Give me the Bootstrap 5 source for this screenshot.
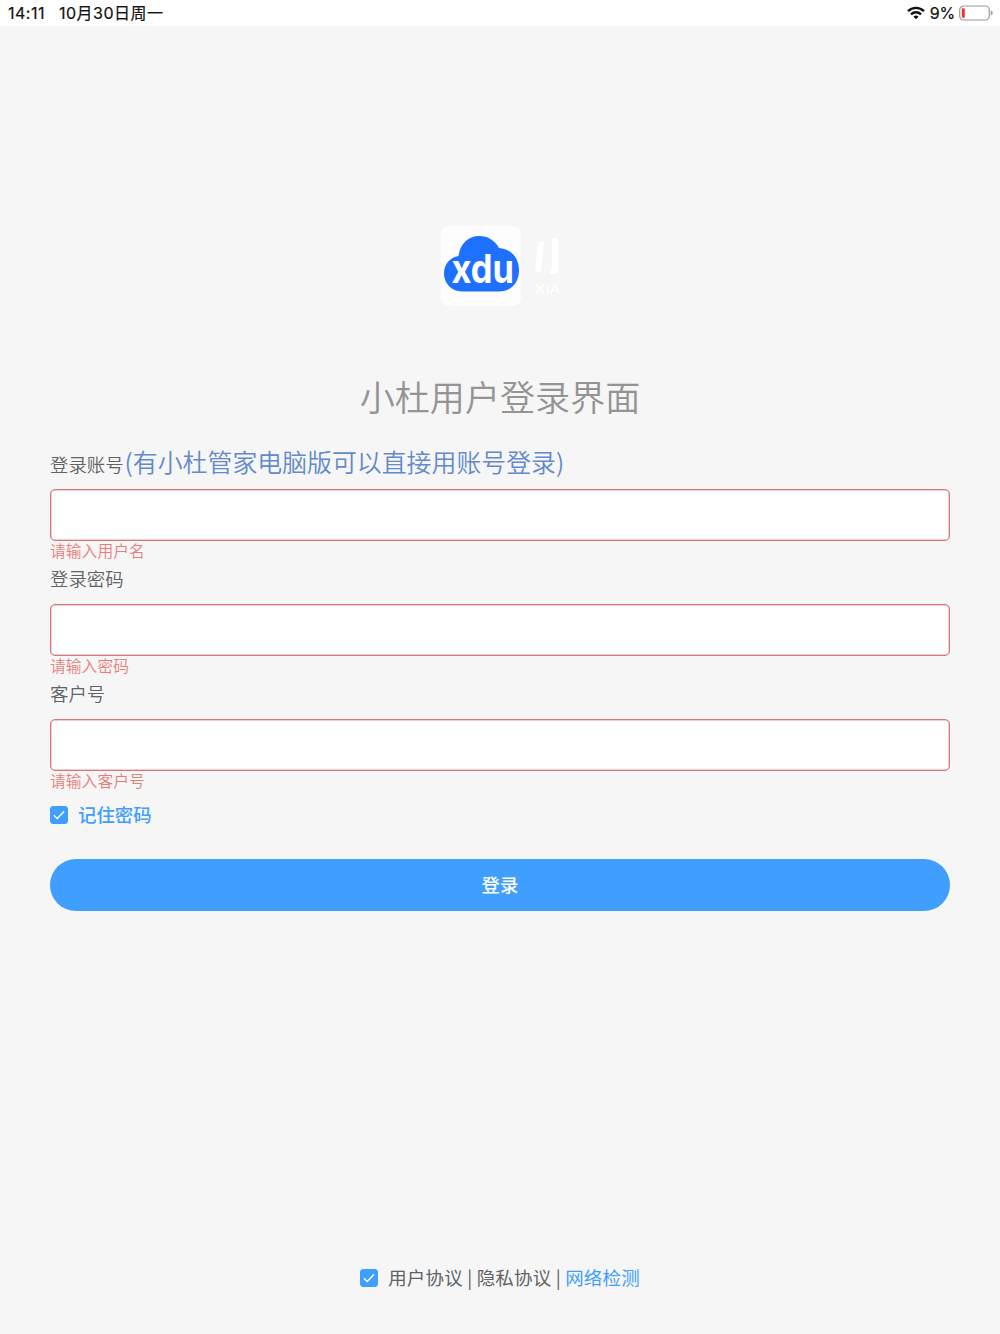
<!DOCTYPE html>
<html lang="zh-CN">

<head>
  <meta charset="UTF-8">
  <meta name="viewport" content="width=device-width, initial-scale=1.0">
  <title>小杜用户登录界面</title>
  <link href="https://cdn.jsdelivr.net/npm/bootstrap@5.3.0/dist/css/bootstrap.min.css" rel="stylesheet">
  <style>
    body {
      background: #f6f6f6;
      font-family: "Noto Sans CJK SC", sans-serif;
      font-size: 18.4px;
      color: #606266;
    }

    .status-bar {
      height: 26px;
      padding: 0 7px 0 8px;
      font-family: Inter, "Noto Sans CJK SC", sans-serif;
      font-size: 16px;
      line-height: 26px;
      letter-spacing: .5px;
      color: #111;
      -webkit-text-stroke: .2px #111;
    }

    .status-date {
      margin-left: 14px;
    }

    .status-battery {
      margin: 0 4px 0 5px;
      letter-spacing: -.2px;
    }

    .login-page {
      height: 1308px;
      padding: 199px 50px 0;
    }

    .login-title {
      margin: 61px 0 21.6px;
      font-size: 35.1px;
      font-weight: 350;
      line-height: 56px;
      color: #949494;
    }

    .login-label {
      height: 34px;
      margin-bottom: 7.7px;
      line-height: 32px;
      font-weight: 350;
    }

    .account-label {
      height: 36px;
      line-height: 31px;
    }

    .login-hint {
      padding-left: 1px;
      font-size: 24.9px;
      font-weight: 350;
      color: #628acd;
    }

    .login-input {
      height: 52px;
      border: 1px solid #d9787b;
      border-radius: 5px;
      box-shadow: inset 0 0 0 .5px #e39a9c;
    }

    .login-error {
      height: 21px;
      font-size: 15.8px;
      font-weight: 350;
      line-height: 19px;
      color: #e67f7c;
    }

    .login-check {
      width: 18px;
      height: 18px;
      margin: 0;
      border-radius: 3px !important;
    }

    .login-check:checked {
      background-color: #409eff;
      border-color: #409eff;
    }

    .login-check:checked[type=checkbox] {
      background-image: url("data:image/svg+xml,%3csvg xmlns='http://www.w3.org/2000/svg' viewBox='0 0 16 16'%3e%3cpath fill='none' stroke='%23fff' stroke-width='1.4' d='M2.8 8.2l3.400 3.400 7-7.400'/%3e%3c/svg%3e");
    }

    .check-text {
      padding-left: 10px;
    }

    .text-link {
      color: #409eff;
    }

    .remember {
      height: 28px;
      margin-top: 9px;
      font-weight: 500;
      color: #409eff;
    }

    .login-btn {
      height: 52px;
      margin-top: 30px;
      background: #409eff;
      font-size: 18.4px;
      font-weight: 500;
      color: #fff;
    }

    .agreement {
      height: 28px;
      margin-bottom: 42px;
      font-size: 18.5px;
      letter-spacing: .17px;
    }
  </style>
</head>

<body>

  <header class="status-bar bg-white d-flex align-items-center">
    <span>14:11</span>
    <span class="status-date">10月30日周一</span>
    <!-- wifi -->
    <svg class="ms-auto" width="18" height="14" viewBox="0 0 18 14" fill="none" stroke="#111" stroke-width="2.4">
      <path d="M1 5.1a11.6 11.6 0 0 1 16 0" />
      <path d="M4 8.3a7.2 7.2 0 0 1 10 0" />
      <path d="M6.4 10.7a3.8 3.8 0 0 1 5.2 0L9 13.3z" fill="#111" stroke="none" />
    </svg>
    <span class="status-battery">9%</span>
    <!-- battery -->
    <svg width="34" height="16" viewBox="0 0 34 16">
      <rect x=".7" y="1" width="29.6" height="14" rx="4" fill="none" stroke="#999" stroke-width="1.2" />
      <rect x="2.8" y="3.2" width="3" height="9.6" rx="1" fill="#e83b30" />
      <path d="M31.8 5.5q2 .6 2 2.5t-2 2.5z" fill="#999" />
    </svg>
  </header>

  <main class="login-page d-flex flex-column">
    <div class="text-center">
      <svg class="d-block mx-auto" width="120" height="82" viewBox="0 0 120 82">
        <rect x="1" y="1" width="80" height="80" rx="8" fill="#fdfdfd" />
        <path d="M22 66.500C11 66.500 4 58 4 48.500C4 39 10 32.500 18.500 31C20 19 28 11 39 11C48 11 55 15.500 59 23C71 24 79 33 79 45C79 58 71 66.500 59 66.500Z" fill="#1e70ff" />
        <text x="11.500" y="58" font-family="Inter, sans-serif" font-size="40" font-weight="700" fill="#fff" textLength="62.500" lengthAdjust="spacingAndGlyphs">xdu</text>
        <path d="M98 16.500h6l-3 30h-6zM112 13h6v32q0 4-4 4h-4l-1-5h3z" fill="#fff" />
        <text x="95" y="69" font-family="Inter, sans-serif" font-size="13" fill="#fff" textLength="25" lengthAdjust="spacingAndGlyphs">XIA</text>
      </svg>
      <h1 class="login-title">小杜用户登录界面</h1>
    </div>

    <form>
      <label class="login-label account-label d-block" for="account">登录账号<span class="login-hint">(有小杜管家电脑版可以直接用账号登录)</span></label>
      <input type="text" class="form-control login-input" id="account">
      <div class="login-error">请输入用户名</div>

      <label class="login-label d-block" for="password">登录密码</label>
      <input type="password" class="form-control login-input" id="password">
      <div class="login-error">请输入密码</div>

      <label class="login-label d-block" for="customer">客户号</label>
      <input type="text" class="form-control login-input" id="customer">
      <div class="login-error">请输入客户号</div>

      <div class="remember d-flex align-items-center">
        <input class="form-check-input login-check" type="checkbox" id="remember" checked>
        <label class="check-text" for="remember">记住密码</label>
      </div>
      <button type="button" class="btn login-btn w-100 rounded-pill border-0 p-0">登录</button>
    </form>

    <footer class="agreement d-flex justify-content-center align-items-center mt-auto">
      <input class="form-check-input login-check" type="checkbox" id="agree" checked>
      <label class="check-text" for="agree">用户协议 | 隐私协议 | <span class="text-link">网络检测</span></label>
    </footer>
  </main>

  <script src="https://cdn.jsdelivr.net/npm/bootstrap@5.3.0/dist/js/bootstrap.bundle.min.js"></script>
</body>

</html>
